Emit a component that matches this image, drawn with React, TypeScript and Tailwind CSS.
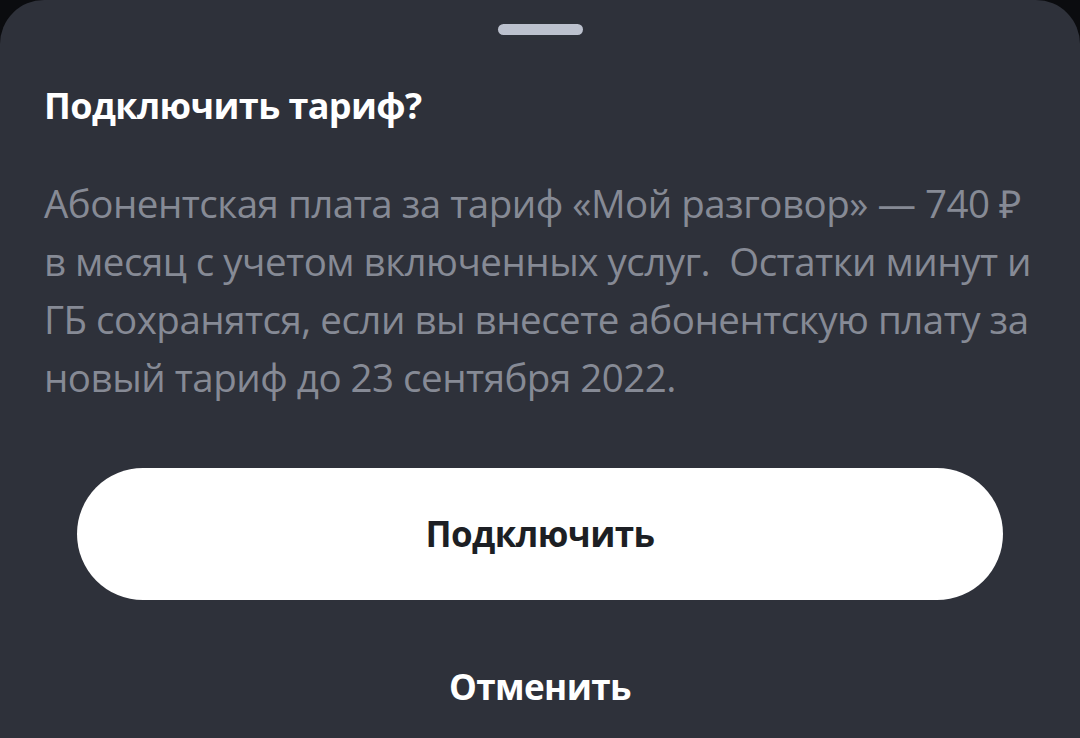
import React from 'react';

export default function App() {
  return (
    <div className="w-[1080px] h-[738px] bg-[#0b0c0f] overflow-hidden" style={{ fontFamily: '"Open Sans", "Liberation Sans", sans-serif' }}>
      <div className="h-full bg-[#2e313a] rounded-t-[44px] flex flex-col">
        <div className="flex justify-center pt-[24px]">
          <div className="w-[85px] h-[11px] rounded-full bg-[#bcc1ce]" />
        </div>

        <h3 className="mt-[47px] px-[44px] text-[36px] leading-[48px] font-bold text-white tracking-[-0.6px]">
          Подключить тариф?
        </h3>

        <p className="mt-[44px] pl-[44px] pr-[40px] text-[38.5px] leading-[58px] text-[#868a95] tracking-[-0.5px]">
          Абонентская плата за тариф «Мой разговор» — 740 ₽ в месяц с учетом включенных услуг.&nbsp; Остатки минут и ГБ сохранятся, если вы внесете абонентскую плату за новый тариф до 23 сентября 2022.
        </p>

        <div className="mt-[62px] px-[77px]">
          <button className="w-full h-[132px] rounded-full bg-white text-[#1d1f24] text-[35px] font-bold tracking-[-0.6px]">
            Подключить
          </button>
        </div>

        <button className="mt-[61px] self-center text-white text-[35px] font-bold tracking-[-0.6px]">
          Отменить
        </button>
      </div>
    </div>
  );
}
